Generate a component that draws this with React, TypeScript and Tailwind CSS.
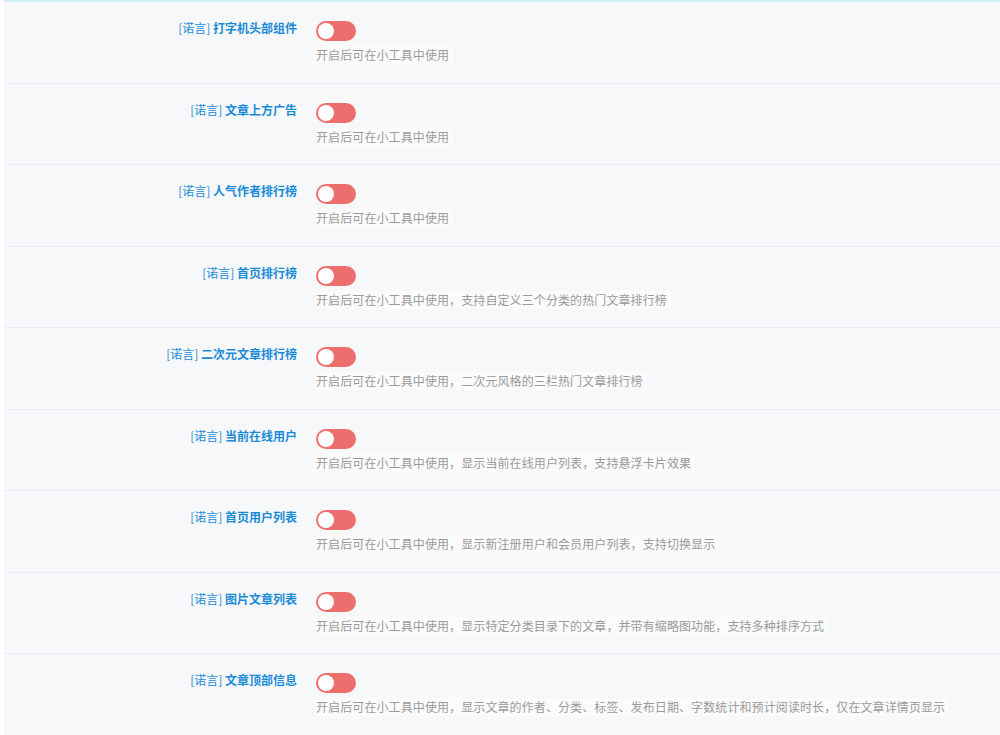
const rows = [
  { name: '打字机头部组件', desc: '开启后可在小工具中使用' },
  { name: '文章上方广告', desc: '开启后可在小工具中使用' },
  { name: '人气作者排行榜', desc: '开启后可在小工具中使用' },
  { name: '首页排行榜', desc: '开启后可在小工具中使用，支持自定义三个分类的热门文章排行榜' },
  { name: '二次元文章排行榜', desc: '开启后可在小工具中使用，二次元风格的三栏热门文章排行榜' },
  { name: '当前在线用户', desc: '开启后可在小工具中使用，显示当前在线用户列表，支持悬浮卡片效果' },
  { name: '首页用户列表', desc: '开启后可在小工具中使用，显示新注册用户和会员用户列表，支持切换显示' },
  { name: '图片文章列表', desc: '开启后可在小工具中使用，显示特定分类目录下的文章，并带有缩略图功能，支持多种排序方式' },
  { name: '文章顶部信息', desc: '开启后可在小工具中使用，显示文章的作者、分类、标签、发布日期、字数统计和预计阅读时长，仅在文章详情页显示' },
];

const Toggle = () => (
  <div className="w-10 h-5 rounded-full bg-[#ee6e6e] flex items-center pl-[2px]">
    <div className="w-4 h-4 rounded-full bg-white" />
  </div>
);

export default function App() {
  return (
    <div
      className="w-[1000px] h-[735px] overflow-hidden bg-white pl-1 text-[12px]"
      style={{ fontFamily: '"Noto Sans CJK SC", "Noto Sans", sans-serif' }}
    >
      <div className="h-full bg-[#f7f8fa] border-t-2 border-[#d3edf4]">
        {rows.map((row) => (
          <div key={row.name} className="h-[81.5px] border-b border-[#eaedf1] flex pt-[19px]">
            <div className="w-[312px] text-right pr-[19px] leading-[20px] text-[#1a8bd8] -mt-[3px]">
              <span>[诺言]</span> <span className="font-bold">{row.name}</span>
            </div>
            <div className="flex flex-col items-start">
              <Toggle />
              <div className="mt-[5px] leading-[18px] text-[#9a9a9a] bg-[#fbfbfc] pr-1 tracking-[0.1px]">{row.desc}</div>
            </div>
          </div>
        ))}
      </div>
    </div>
  );
}
